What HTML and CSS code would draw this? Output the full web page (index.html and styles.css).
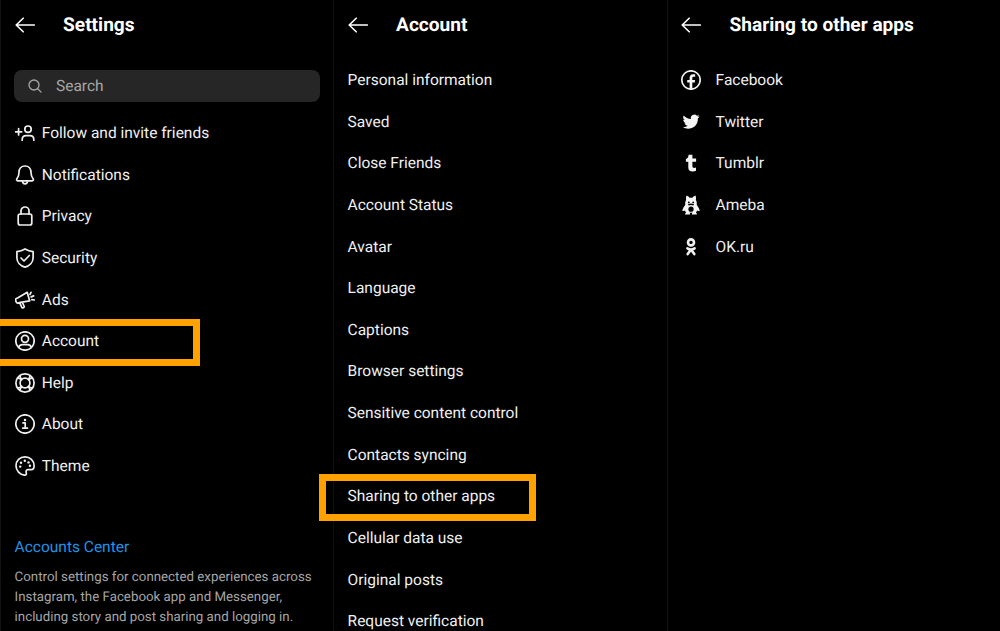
FILE: index.html
```html
<!DOCTYPE html>
<html lang="en">
<head>
<meta charset="utf-8">
<title>Settings</title>
<link rel="stylesheet" href="styles.css">
</head>
<body>
<main class="screens">
  <section class="screen">
    <header class="header">
      <svg class="back" viewBox="0 0 20 16"><path d="M8.2 1.2 1.2 8l7 6.8M1.5 8h17.8"/></svg>
      <h1 class="title">Settings</h1>
    </header>
    <div class="search">
      <svg class="search-icon" viewBox="0 0 14 14"><circle cx="6" cy="6" r="5"/><path d="m9.7 9.7 3.4 3.4"/></svg>
      <span>Search</span>
    </div>
    <ul class="list with-icons">
      <li class="row"><svg class="icon" viewBox="0 0 20 20"><circle cx="13" cy="6.2" r="3.2"/><path d="M7.2 17.2v-.7c0-2.4 1.5-3.9 3.9-3.9h3.8c2.4 0 3.9 1.5 3.9 3.9v.7M.5 8.8h6.200M3.600 5.700v6.200"/></svg><span>Follow and invite friends</span></li>
      <li class="row"><svg class="icon" viewBox="0 0 20 20"><path d="M10 1C6.300 1 4 3.800 4 7.500c0 3.200-.9 4.700-2.100 6.300-.7 1-.2 2 .9 2h14.400c1.100 0 1.600-1 .9-2C16.900 12.200 16 10.700 16 7.500 16 3.800 13.700 1 10 1Z"/><path d="M7.500 16.500c.3 1.500 1.100 2.300 2.500 2.300s2.200-.8 2.500-2.300"/></svg><span>Notifications</span></li>
      <li class="row"><svg class="icon" viewBox="0 0 20 20"><rect x="3.200" y="8" width="13.600" height="11" rx="2"/><path d="M6 8V5a4 4 0 0 1 8 0v3"/></svg><span>Privacy</span></li>
      <li class="row"><svg class="icon" viewBox="0 0 20 20"><path d="M10 .9c2.600 1.500 5.200 2.300 8.100 2.700v6.200c0 4.500-3.500 8.100-8.100 9.300-4.600-1.200-8.100-4.800-8.100-9.300V3.600C4.800 3.200 7.400 2.400 10 .9Z"/><path d="m6 10 3 3 5.300-5.500"/></svg><span>Security</span></li>
      <li class="row"><svg class="icon" viewBox="0 0 20 20"><path d="M12.200 2.300 3 7.700 1 8.700c-.7.400-.6 1.200-.3 2l.7 1.600c.3.800.9 1 1.600.8l2.500-.7 9.200-1.500ZM4.800 12.900l2 4.600c.4 1 2.800 0 2.400-1l-1.900-4.300M15 4.400l1-2.100M16.200 6.900l2.400-1M16.800 9.600l2.600.4"/></svg><span>Ads</span></li>
      <li class="row"><svg class="icon" viewBox="0 0 20 20"><circle cx="10" cy="10" r="9.200"/><circle cx="10" cy="7.800" r="3.500"/><path d="M3.700 16.400c.7-2 2-2.700 3.800-2.700h5c1.800 0 3.100.7 3.800 2.700"/></svg><span>Account</span><i class="highlight highlight-account"></i></li>
      <li class="row"><svg class="icon" viewBox="0 0 20 20"><circle cx="10" cy="10" r="9.100"/><circle cx="10" cy="10" r="4.900"/><path d="M4.900 2.600c.5 2.100.9 3 1.900 3.900M2.600 4.900c2.100.5 3 .9 3.900 1.900M15.100 2.600c-.5 2.100-.9 3-1.900 3.900M17.400 4.900c-2.100.5-3 .9-3.900 1.900M4.900 17.400c.5-2.100.9-3 1.900-3.900M2.600 15.100c2.100-.5 3-.9 3.900-1.900M15.100 17.400c-.5-2.100-.9-3-1.900-3.900M17.400 15.100c-2.100-.5-3-.9-3.900-1.900"/></svg><span>Help</span></li>
      <li class="row"><svg class="icon" viewBox="0 0 20 20"><circle cx="10" cy="10" r="9.200"/><path d="M8 8.900h2.200v5M7.700 14.100h4.800"/><circle class="solid" cx="10" cy="5.900" r="1.250"/></svg><span>About</span></li>
      <li class="row"><svg class="icon" viewBox="0 0 20 20"><path d="M9.900.9C4.900.9 1 4.700 1 9.700s3.900 8.900 8.400 9.400c1.600.2 2.200-.8 1.900-2.100-.5-1.700-.2-3.200 1.600-3.300h3.100c2.100 0 3.100-1.300 3.100-4C19.100 4.700 15 .9 9.900.9Z"/><g class="solid"><circle cx="5.200" cy="10.600" r="1.200"/><circle cx="6" cy="6.700" r="1.200"/><circle cx="9.800" cy="4.700" r="1.200"/><circle cx="13.500" cy="6.400" r="1.200"/><circle cx="14.900" cy="9.800" r="1.200"/></g></svg><span>Theme</span></li>
    </ul>
    <footer class="center">
      <a class="center-link">Accounts Center</a>
      <p class="center-text">Control settings for connected experiences across<br>Instagram, the Facebook app and Messenger,<br>including story and post sharing and logging in.</p>
    </footer>
  </section>

  <section class="screen">
    <header class="header">
      <svg class="back" viewBox="0 0 20 16"><path d="M8.2 1.2 1.2 8l7 6.8M1.5 8h17.8"/></svg>
      <h1 class="title">Account</h1>
    </header>
    <ul class="list">
      <li class="row"><span>Personal information</span></li>
      <li class="row"><span>Saved</span></li>
      <li class="row"><span>Close Friends</span></li>
      <li class="row"><span>Account Status</span></li>
      <li class="row"><span>Avatar</span></li>
      <li class="row"><span>Language</span></li>
      <li class="row"><span>Captions</span></li>
      <li class="row"><span>Browser settings</span></li>
      <li class="row"><span>Sensitive content control</span></li>
      <li class="row"><span>Contacts syncing</span></li>
      <li class="row"><span>Sharing to other apps</span><i class="highlight highlight-sharing"></i></li>
      <li class="row"><span>Cellular data use</span></li>
      <li class="row"><span>Original posts</span></li>
      <li class="row"><span>Request verification</span></li>
    </ul>
  </section>

  <section class="screen">
    <header class="header">
      <svg class="back" viewBox="0 0 20 16"><path d="M8.2 1.2 1.2 8l7 6.8M1.5 8h17.8"/></svg>
      <h1 class="title">Sharing to other apps</h1>
    </header>
    <ul class="list apps">
      <li class="row"><svg class="icon" viewBox="0 0 20 20"><circle cx="10" cy="10" r="9.200"/><path class="fill" d="M8.600 18.800V12.600H6.200V9.900h2.400V8.100c0-2.500 1.200-3.900 3.500-3.900.8 0 1.700.1 2.100.2v2.400h-1.500c-1 0-1.400.5-1.400 1.400v1.700h2.800l-.4 2.700h-2.400v6.200Z"/></svg><span>Facebook</span></li>
      <li class="row"><svg class="icon" viewBox="0 0 20 20"><path class="fill" d="M18.600 4.300c-.6.300-1.300.5-2 .6.700-.5 1.200-1.100 1.500-1.900-.7.400-1.400.7-2.200.8a3.500 3.500 0 0 0-6 3.200C7.100 6.900 4.600 5.500 2.800 3.400a3.500 3.500 0 0 0 1.100 4.700c-.6 0-1.100-.2-1.600-.4 0 1.700 1.200 3.100 2.800 3.500-.5.100-1 .1-1.600 0 .5 1.400 1.700 2.400 3.300 2.500a7 7 0 0 1-5.200 1.400c5.900 3.700 15.300.9 15.300-8.600.7-.5 1.300-1.100 1.700-2.200Z"/></svg><span>Twitter</span></li>
      <li class="row"><svg class="icon" viewBox="0 0 20 20"><path class="fill" d="M7.600 1.700h3.800v3.700h3.700v3.400h-3.700v4.300c0 1.500.7 1.900 1.700 1.900.7 0 1.200-.2 1.900-.5v3.200c-.8.500-1.900.8-3.300.8-2.900 0-4.400-1.500-4.400-4.100V8.800H4.900V6.100c1.700-.6 2.500-1.800 2.700-4.400Z"/></svg><span>Tumblr</span></li>
      <li class="row"><svg class="icon" viewBox="0 0 20 20"><path class="fill" d="M5.500.5c1.600.4 2.500 1.300 3 2.300h3c.5-1 1.400-1.900 3-2.300.6 1.500.7 3 .4 4.500.8 1.400 1 3.200.9 5 1.300 1.500 2.200 3.200 3 5.700-.9.300-1.900.3-2.800-.1-.2.900-.6 1.600-1.200 2.200.8.200 1.100.7 1.100 1.600h-5c0-.9.200-1.500.9-1.700H8.200c.7.200.9.800.9 1.700h-5c0-.9.300-1.400 1.100-1.600-.6-.6-1-1.300-1.200-2.200-.9.400-1.900.4-2.800.1.800-2.500 1.700-4.200 3-5.700-.1-1.800.1-3.600.9-5C4.800 3.500 4.900 2 5.500.5Z"/><g class="cutout"><circle cx="10" cy="14.200" r="2.600"/><circle cx="7.800" cy="7.400" r=".9"/><circle cx="12.200" cy="7.400" r=".9"/><path d="M6.800 9.300 10 8.500l3.200.8-1 1.300L10 9.900l-2.200.7Z"/></g></svg><span>Ameba</span></li>
      <li class="row"><svg class="icon" viewBox="0 0 20 20"><g class="bold"><circle cx="10" cy="5.400" r="3"/><path d="M6.400 11.300c2.200 1.400 5 1.400 7.200 0M10 12.600l-3.300 4.500M10 12.600l3.300 4.500"/></g></svg><span>OK.ru</span></li>
    </ul>
  </section>
</main>
</body>
</html>
```
FILE: styles.css
```css
* { box-sizing: border-box; }
body {
  margin: 0;
  background: #000;
  color: #f0f0f0;
  font-family: Roboto, "Liberation Sans", sans-serif;
  font-size: 15.5px;
  text-rendering: geometricPrecision;
}
.screens {
  display: grid;
  grid-template-columns: 333px 333.500px 333.500px;
  height: 631px;
  overflow: hidden;
}
.screen {
  display: flex;
  flex-direction: column;
  padding-left: 13.600px;
  border-left: 1px solid #111;
  min-width: 0;
}
.header {
  display: flex;
  align-items: center;
  flex: none;
  height: 50px;
  gap: 28.500px;
}
.back {
  width: 20px;
  height: 16px;
  margin-top: 0;
  fill: none;
  stroke: #fff;
  stroke-width: 1.600;
  stroke-linecap: round;
  stroke-linejoin: round;
}
.title {
  margin: -1.500px 0 0;
  color: #fff;
  font-size: 19.100px;
  font-weight: 700;
  white-space: nowrap;
}
.search {
  display: flex;
  align-items: center;
  flex: none;
  width: 306px;
  height: 32px;
  margin: 20px 0 10.200px -.6px;
  padding-left: 14px;
  gap: 14px;
  border-radius: 8px;
  background: #262626;
  color: #a6a6a6;
}
.search-icon {
  width: 14px;
  height: 14px;
  fill: none;
  stroke: #a6a6a6;
  stroke-width: 1.300;
  stroke-linecap: round;
}
.list {
  flex: none;
  margin: 0;
  padding: 9.200px 0 0;
  list-style: none;
}
.with-icons { padding-top: 0; }
.row {
  display: flex;
  align-items: center;
  position: relative;
  height: 41.630px;
  gap: 7.200px;
  white-space: nowrap;
}
.apps .row { gap: 14.500px; }
.icon {
  flex: none;
  width: 20px;
  height: 20px;
  fill: none;
  stroke: #f0f0f0;
  stroke-width: 1.700;
  stroke-linecap: round;
  stroke-linejoin: round;
}
.fill, .solid { fill: #f5f5f5; stroke: none; }
.cutout { fill: #000; stroke: none; }
.bold { stroke-width: 2.600; }
.highlight {
  position: absolute;
  z-index: 1;
  height: 47px;
  border: 7px solid #ffa200;
}
.highlight-account {
  top: -1px;
  left: -14.600px;
  width: 200px;
  border-left: 0;
}
.highlight-sharing {
  top: -1px;
  left: -28.600px;
  width: 217px;
}
.center { margin-top: 50px; }
.center-link {
  color: #1f93e8;
  display: block;
  line-height: 20px;
}
.center-text {
  margin: 11px 0 0;
  color: #a6a6a6;
  font-size: 13.300px;
  line-height: 20px;
  white-space: nowrap;
}
```
